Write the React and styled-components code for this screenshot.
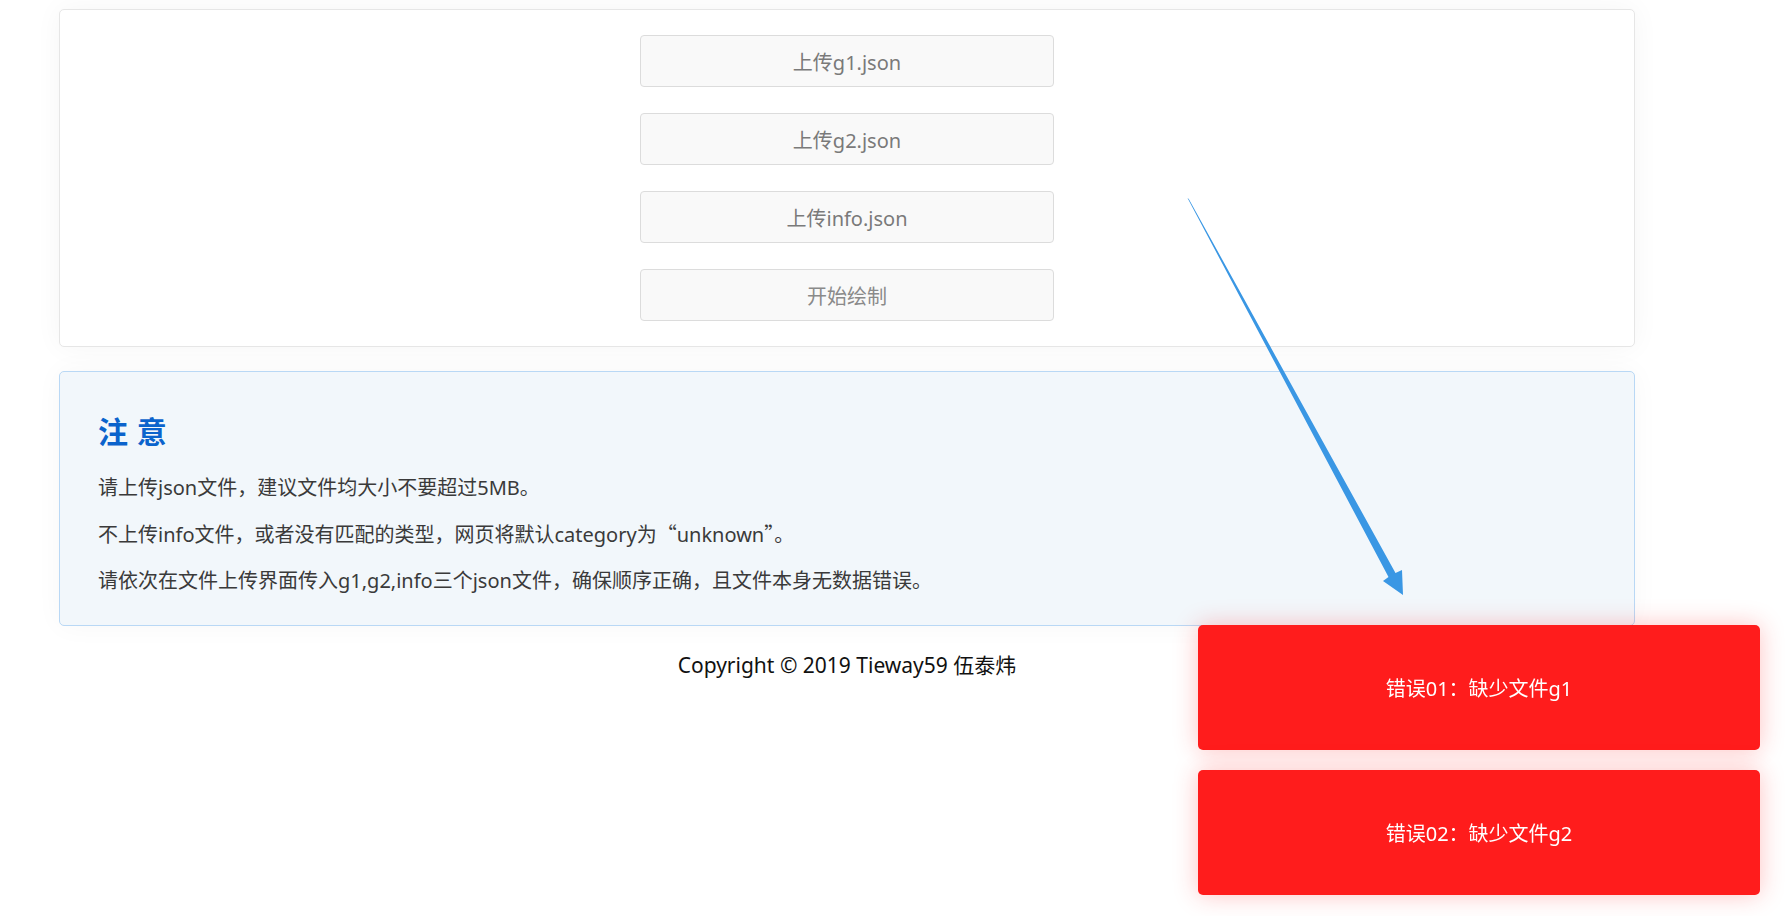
import React from "react";
import styled, { createGlobalStyle } from "styled-components";

const Global = createGlobalStyle`
  html, body { margin: 0; padding: 0; background: #ffffff; }
  body {
    font-family: "Noto Sans", "Noto Sans CJK SC", sans-serif;
    overflow: hidden;
  }
`;

const Page = styled.div`
  position: relative;
  width: 1785px;
  height: 916px;
  padding: 9px 0 0 59px;
  box-sizing: border-box;
`;

const Column = styled.div`
  width: 1576px;
  display: flex;
  flex-direction: column;
  gap: 24px;
`;

const UploadCard = styled.section`
  background: #ffffff;
  border: 1px solid #e6e6e6;
  border-radius: 5px;
  box-shadow: 0 0 28px rgba(0, 0, 0, 0.045);
  padding: 25px 0 25px;
  display: flex;
  flex-direction: column;
  align-items: center;
  gap: 26px;
`;

const FileButton = styled.button`
  width: 414px;
  height: 52px;
  box-sizing: border-box;
  background: #f9f9f9;
  border: 1px solid #dcdcdc;
  border-radius: 4px;
  color: ${(p) => (p.$muted ? "#8a8a8a" : "#7a7a7a")};
  font-family: "Noto Sans", "Noto Sans CJK SC", sans-serif;
  font-size: 20px;
  padding: 0;
  cursor: pointer;
`;

const Notice = styled.section`
  background: #f2f7fb;
  border: 1px solid #b9d8f5;
  border-radius: 5px;
  box-shadow: 0 0 28px rgba(0, 0, 0, 0.035);
  padding: 41px 38px 29px;
`;

const NoticeTitle = styled.h2`
  margin: 0 0 25px;
  font-family: "Noto Sans CJK SC", sans-serif;
  font-size: 30px;
  line-height: 35px;
  font-weight: 700;
  color: #0b63cc;
  letter-spacing: 1px;
`;

const NoticeText = styled.p`
  margin: 0 0 16px;
  font-size: 20px;
  line-height: 30px;
  color: #3a3a3a;
  &:last-child { margin-bottom: 0; }
`;

const Quote = styled.span`
  font-family: "Noto Sans CJK SC", sans-serif;
`;

const Footer = styled.footer`
  text-align: center;
  font-size: 21px;
  line-height: 30px;
  color: #111111;
`;

const ToastStack = styled.div`
  position: fixed;
  right: 25px;
  bottom: 21px;
  display: flex;
  flex-direction: column;
  gap: 20px;
  z-index: 10;
`;

const Toast = styled.div`
  width: 562px;
  height: 125px;
  background: #ff1c1c;
  border-radius: 5px;
  box-shadow: 0 0 24px rgba(255, 40, 40, 0.28);
  color: #ffffff;
  font-size: 20px;
  display: flex;
  align-items: center;
  justify-content: center;
`;

const ArrowLayer = styled.svg`
  position: absolute;
  left: 0;
  top: 0;
  width: 1785px;
  height: 916px;
  pointer-events: none;
  z-index: 5;
`;

const buttons = [
  { label: "上传g1.json" },
  { label: "上传g2.json" },
  { label: "上传info.json" },
  { label: "开始绘制", muted: true },
];

export default function App() {
  return (
    <>
      <Global />
      <Page>
        <Column>
          <UploadCard>
            {buttons.map((b) => (
              <FileButton key={b.label} $muted={b.muted}>
                {b.label}
              </FileButton>
            ))}
          </UploadCard>
          <Notice>
            <NoticeTitle>注 意</NoticeTitle>
            <NoticeText>请上传json文件，建议文件均大小不要超过5MB。</NoticeText>
            <NoticeText>
              不上传info文件，或者没有匹配的类型，网页将默认category为<Quote>“</Quote>unknown<Quote>”</Quote>。
            </NoticeText>
            <NoticeText>
              请依次在文件上传界面传入g1,g2,info三个json文件，确保顺序正确，且文件本身无数据错误。
            </NoticeText>
          </Notice>
          <Footer>Copyright © 2019 Tieway59 伍泰炜</Footer>
        </Column>
        <ArrowLayer viewBox="0 0 1785 916">
          <polygon
            points="1187.5,198 1188.8,199 1395.5,573 1402,570 1403,595 1383,581 1388.5,577"
            fill="#3a97e4"
          />
        </ArrowLayer>
        <ToastStack>
          <Toast>错误01：缺少文件g1</Toast>
          <Toast>错误02：缺少文件g2</Toast>
        </ToastStack>
      </Page>
    </>
  );
}
